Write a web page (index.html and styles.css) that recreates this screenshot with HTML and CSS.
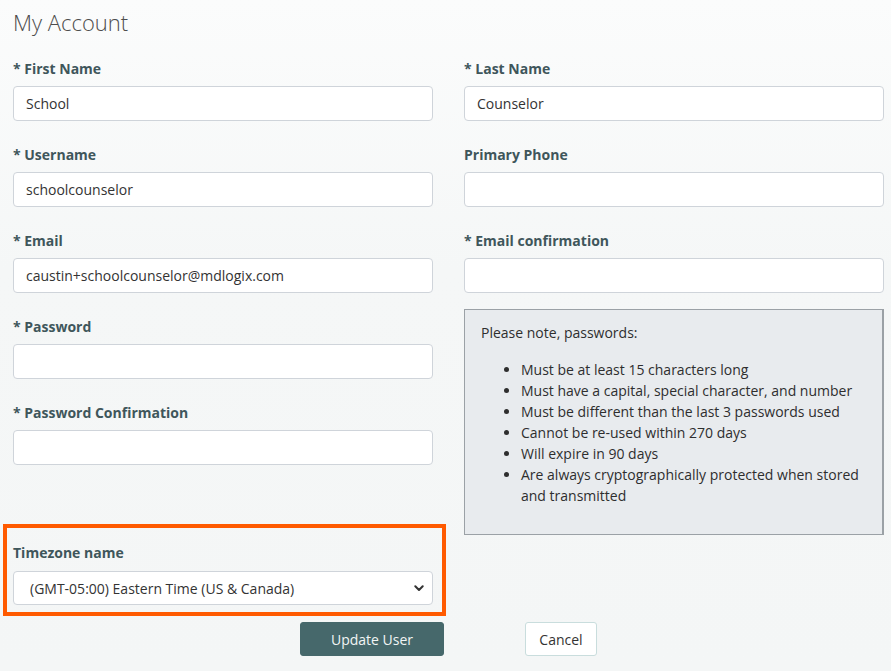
FILE: index.html
```html
<!DOCTYPE html>
<html lang="en">
<head>
<meta charset="utf-8">
<title>My Account</title>
<link rel="stylesheet" href="styles.css">
</head>
<body>
<main class="page">
  <h1 class="title">My Account</h1>
  <form class="form">
    <div class="grid">
      <div class="col">
        <div class="field">
          <label class="label">* First Name</label>
          <input class="input" type="text" value="School">
        </div>
        <div class="field">
          <label class="label">* Username</label>
          <input class="input" type="text" value="schoolcounselor">
        </div>
        <div class="field">
          <label class="label">* Email</label>
          <input class="input" type="text" value="caustin+schoolcounselor@mdlogix.com">
        </div>
        <div class="field">
          <label class="label">* Password</label>
          <input class="input" type="password" value="">
        </div>
        <div class="field">
          <label class="label">* Password Confirmation</label>
          <input class="input" type="password" value="">
        </div>
      </div>
      <div class="col">
        <div class="field">
          <label class="label">* Last Name</label>
          <input class="input" type="text" value="Counselor">
        </div>
        <div class="field">
          <label class="label">Primary Phone</label>
          <input class="input" type="text" value="">
        </div>
        <div class="field field-short">
          <label class="label">* Email confirmation</label>
          <input class="input" type="text" value="">
        </div>
        <div class="note">
          <p class="note-intro">Please note, passwords:</p>
          <ul class="note-list">
            <li>Must be at least 15 characters long</li>
            <li>Must have a capital, special character, and number</li>
            <li>Must be different than the last 3 passwords used</li>
            <li>Cannot be re-used within 270 days</li>
            <li>Will expire in 90 days</li>
            <li>Are always cryptographically protected when stored and transmitted</li>
          </ul>
        </div>
      </div>
    </div>
    <div class="tz-row">
      <div class="field tz-field">
        <label class="label">Timezone name</label>
        <div class="select-wrap">
          <select class="select">
            <option>(GMT-05:00) Eastern Time (US &amp; Canada)</option>
          </select>
          <svg class="chevron" width="10" height="7" viewBox="0 0 10 7" aria-hidden="true"><path d="M1.3 1.3 L5 5 L8.7 1.3" fill="none" stroke="#333" stroke-width="2" stroke-linecap="round" stroke-linejoin="round"/></svg>
        </div>
      </div>
    </div>
    <div class="actions">
      <button type="button" class="btn btn-primary">Update User</button>
      <button type="button" class="btn btn-secondary">Cancel</button>
    </div>
  </form>
</main>
</body>
</html>
```

FILE: styles.css
```css
html, body {
  margin: 0;
  padding: 0;
}
body {
  background: linear-gradient(180deg, #fbfcfc 0%, #f5f7f7 40%, #f4f6f6 100%);
  font-family: "Open Sans", "Noto Sans", "Liberation Sans", sans-serif;
  font-size: 14px;
  color: #333;
  min-height: 671px;
}
.page {
  padding: 7px 7px 0 13px;
}
.title {
  margin: 0 0 22px 0;
  font-size: 22px;
  line-height: 30px;
  font-weight: 300;
  color: #4d4d4d;
}
.grid {
  display: grid;
  grid-template-columns: 420px 420px;
  column-gap: 31px;
  align-items: start;
}
.col {
  display: flex;
  flex-direction: column;
}
.field {
  display: flex;
  flex-direction: column;
  margin-bottom: 25px;
}
.field-short {
  margin-bottom: 17px;
}
.label {
  display: block;
  font-weight: 700;
  font-size: 14px;
  line-height: 20px;
  color: #3f565b;
  margin-bottom: 7px;
}
.input, .select {
  box-sizing: border-box;
  width: 100%;
  height: 35px;
  margin: 0;
  border: 1px solid #cfd4da;
  border-radius: 4px;
  background: #fff;
  font-family: "Open Sans", "Noto Sans", "Liberation Sans", sans-serif;
  font-size: 14px;
  color: #333;
  padding: 0 12px;
  outline: none;
}
.field .input {
  margin-bottom: -1px;
}
.note {
  box-sizing: border-box;
  background: #e8ebee;
  border: 1px solid #9ba1a6;
  border-right-width: 2px;
  padding: 12px 16px;
  line-height: 21px;
  color: #2e2e2e;
  margin-bottom: 8px;
}
.note-intro {
  margin: 0 0 16px 0;
}
.note-list {
  margin: 0 0 16px 0;
  padding-left: 40px;
}
.tz-row {
  display: flex;
}
.tz-field {
  position: relative;
  width: 420px;
  margin-bottom: 17px;
}
.tz-field::after {
  content: "";
  position: absolute;
  top: -19px;
  left: -10px;
  right: -13px;
  bottom: -11px;
  border: 4px solid #ff5a00;
  pointer-events: none;
}
.tz-field .label {
  margin-bottom: 8px;
}
.select-wrap {
  position: relative;
}
.select {
  -webkit-appearance: none;
  appearance: none;
  height: 34px;
  padding-left: 16px;
}
.chevron {
  position: absolute;
  right: 9px;
  top: 14px;
}
.actions {
  display: flex;
  justify-content: center;
  gap: 81px;
  width: 871px;
}
.btn {
  box-sizing: border-box;
  height: 34px;
  border-radius: 3px;
  font-family: "Open Sans", "Noto Sans", "Liberation Sans", sans-serif;
  font-size: 14px;
  cursor: pointer;
}
.btn-primary {
  width: 144px;
  background: #46686b;
  border: 1px solid #46686b;
  color: #f2f5f5;
}
.btn-secondary {
  width: 72px;
  background: #fff;
  border: 1px solid #c9dddd;
  color: #333;
}
```
